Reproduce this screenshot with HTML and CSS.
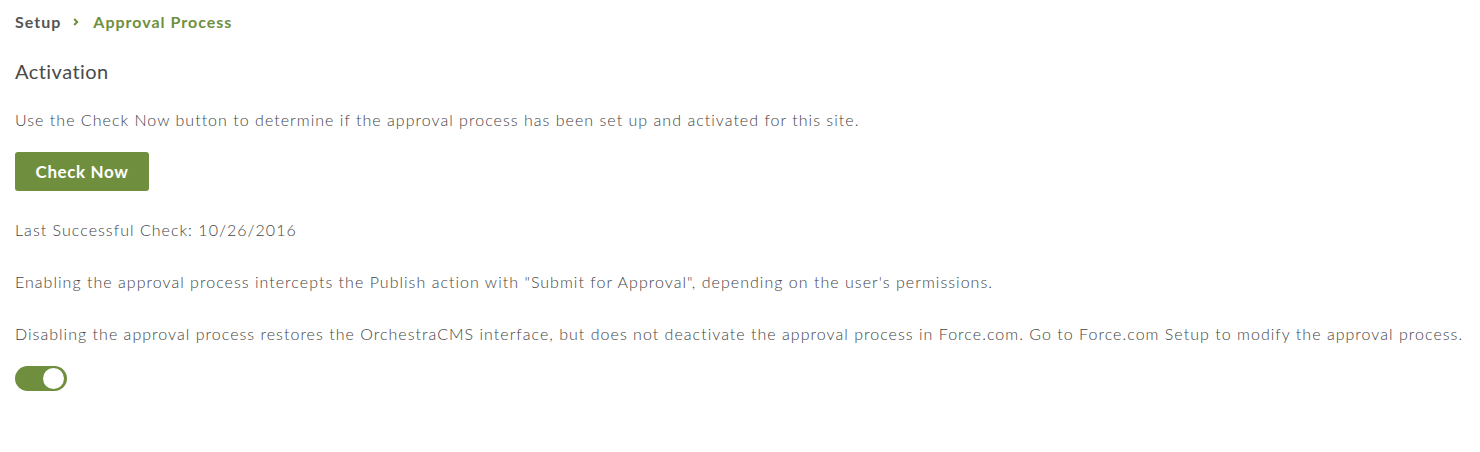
FILE: index.html
```html
<!DOCTYPE html>
<html>
<head>
<meta charset="utf-8">
<link rel="stylesheet" href="styles.css">
</head>
<body>
<div class="page">
  <nav class="crumbs">
    <span class="crumb">Setup</span>
    <svg class="sep" width="6" height="8" viewBox="0 0 6 8"><path d="M1.2 1 L4.2 4 L1.2 7" fill="none" stroke="#6f8f3e" stroke-width="2"/></svg>
    <span class="crumb current">Approval Process</span>
  </nav>
  <h2 class="title">Activation</h2>
  <p class="text first">Use the Check Now button to determine if the approval process has been set up and activated for this site.</p>
  <button class="btn">Check Now</button>
  <p class="text last">Last Successful Check: 10/26/2016</p>
  <p class="text">Enabling the approval process intercepts the Publish action with "Submit for Approval", depending on the user's permissions.</p>
  <p class="text">Disabling the approval process restores the OrchestraCMS interface, but does not deactivate the approval process in Force.com. Go to Force.com Setup to modify the approval process.</p>
  <div class="toggle on"><span class="knob"></span></div>
</div>
</body>
</html>
```
FILE: styles.css
```css
html, body { margin: 0; padding: 0; background: #fff; }
body { font-family: Lato, "Liberation Sans", sans-serif; color: #4a4a4a; }
.page { padding: 10px 0 10px 15px; }
.crumbs { display: flex; align-items: center; height: 22px; font-size: 16px; font-weight: 700; letter-spacing: 1px; }
.crumb { color: #555; }
.crumb.current { color: #6f8f3e; }
.sep { margin: 1px 14px 0 12px; }
.title { margin: 27px 0 0; font-size: 20px; font-weight: 400; color: #4a4a4a; line-height: 24px; letter-spacing: 0.45px; }
.text { margin: 32px 0 0; font-size: 16px; font-weight: 300; line-height: 20px; color: #444; letter-spacing: 1.025px; white-space: nowrap; }
.text.first { margin-top: 27px; }
.btn { margin-top: 22px; display: block; width: 134px; height: 39px; border: none; border-radius: 3px; background: #6f8f3e; color: #fff; font-family: Lato, sans-serif; font-weight: 700; font-size: 17px; letter-spacing: 0.6px; padding: 0; }
.text.last { margin-top: 29px; }
.toggle { margin-top: 22px; width: 52px; height: 25px; border-radius: 13px; background: #6f8f3e; position: relative; }
.knob { position: absolute; right: 3px; top: 2px; width: 21px; height: 21px; border-radius: 50%; background: #fff; }
```
